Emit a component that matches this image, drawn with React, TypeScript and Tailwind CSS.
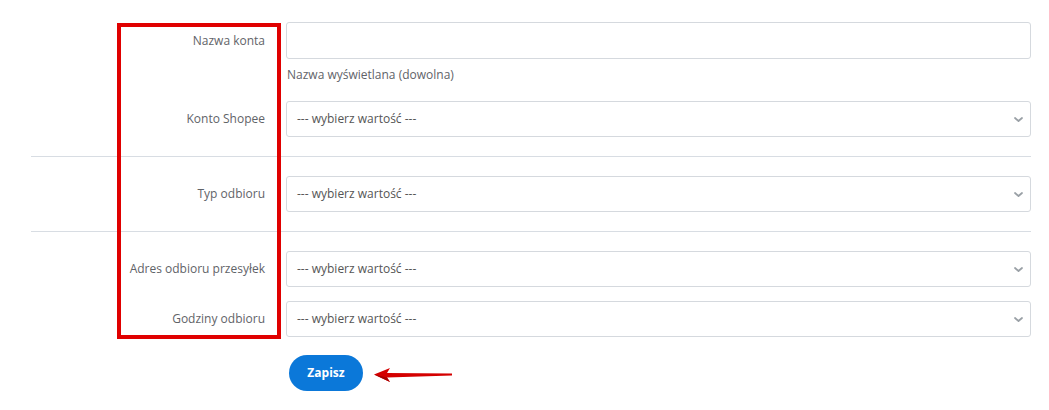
const font = { fontFamily: '"Open Sans", "Liberation Sans", sans-serif' };

const SelectBox = () => (
  <div className="relative flex h-[36px] items-center rounded-[3px] border border-[#d5d9de] bg-white pl-[10px] text-[12px] text-[#555]">
    --- wybierz wartość ---
    <svg className="absolute right-[7px] top-[15px]" width="9" height="6" viewBox="0 0 9 6">
      <polyline points="1,1 4.5,4 8,1" fill="none" stroke="#9aa0a6" strokeWidth="1.8" strokeLinecap="round" strokeLinejoin="round" />
    </svg>
  </div>
);

const Row = ({ label, children }: { label: string; children: React.ReactNode }) => (
  <div className="grid grid-cols-[255px_745px]">
    <div className="flex h-[36px] items-center justify-end pr-[21px] text-[12px] text-[#5f6368]">{label}</div>
    <div>{children}</div>
  </div>
);

export default function App() {
  return (
    <div className="relative h-[410px] w-[1049px] bg-white" style={font}>
      <div className="w-[1031px] pl-[31px] pt-[22px]">
        <div className="grid grid-cols-[255px_745px]">
          <div className="flex h-[37px] items-center justify-end pr-[21px] text-[12px] text-[#5f6368]">Nazwa konta</div>
          <div>
            <input className="block h-[37px] w-full rounded-[3px] border border-[#d5d9de] bg-white px-[10px] text-[12px] outline-none" />
            <div className="mt-[7px] pl-[1px] text-[12px] leading-[17px] text-[#5f6368]">Nazwa wyświetlana (dowolna)</div>
          </div>
        </div>

        <div className="mt-[18px]">
          <Row label="Konto Shopee">
            <SelectBox />
          </Row>
        </div>

        <div className="my-[19px] h-px bg-[#d8dde3]" />

        <Row label="Typ odbioru">
          <SelectBox />
        </Row>

        <div className="my-[19px] h-px bg-[#d8dde3]" />

        <div className="flex flex-col gap-[14px]">
          <Row label="Adres odbioru przesyłek">
            <SelectBox />
          </Row>
          <Row label="Godziny odbioru">
            <SelectBox />
          </Row>
        </div>

        <div className="mt-[18px] pl-[258px]">
          <button className="h-[36px] w-[74px] rounded-full bg-[#0b78d9] text-[12px] font-bold text-white">Zapisz</button>
        </div>
      </div>

      {/* annotation: red frame around labels */}
      <div className="pointer-events-none absolute left-[117px] top-[23px] h-[316px] w-[164px] border-4 border-[#e00000]" />

      {/* annotation: arrow pointing at button */}
      <svg className="pointer-events-none absolute left-[372px] top-[366px]" width="84" height="20" viewBox="0 0 84 20">
        <polygon points="2,8.5 18,2 15,7 80,7.5 80,9.5 15,11.5 18,16" fill="#d40000" />
        <polygon points="2,8.5 15,11.5 18,16" fill="#a80000" />
      </svg>
    </div>
  );
}
